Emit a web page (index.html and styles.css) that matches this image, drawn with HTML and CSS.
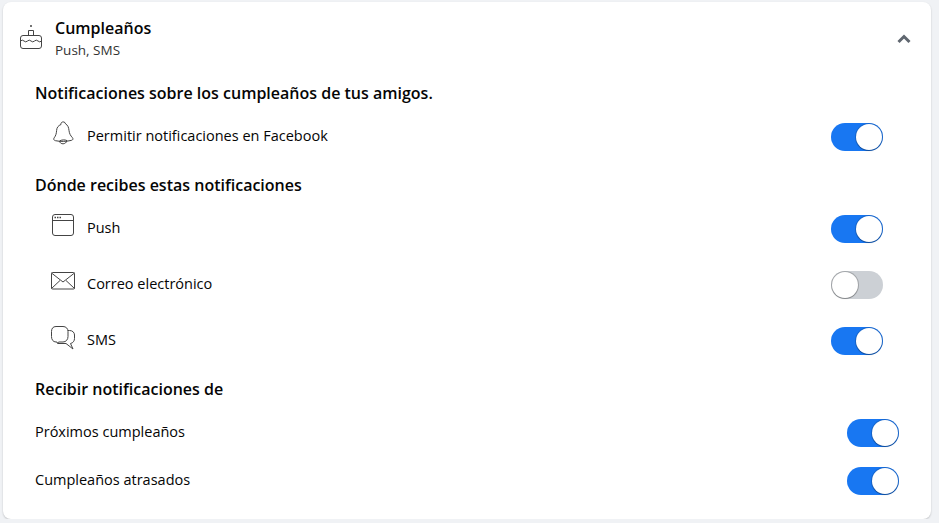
FILE: index.html
```html
<!DOCTYPE html>
<html lang="es">

<head>
    <meta charset="UTF-8">
    <meta name="viewport" content="width=device-width, initial-scale=1.0">
    <title>Cumpleaños</title>
    <link rel="stylesheet" href="styles.css">
</head>

<body>
    <div class="card">
        <!-- cabecera -->
        <div class="header">
            <svg class="cake" width="24" height="26" viewBox="0 0 24 26" fill="none" stroke="#444" stroke-width="1">
                <circle cx="12" cy="2" r="1" fill="#444" stroke="none"></circle>
                <path d="M9.500 11.500v-5h5v5"></path>
                <rect x="1.500" y="11.500" width="21" height="13" rx="2.500"></rect>
                <path d="M1.500 17q1.750-1.800 3.500 0t3.500 0t3.500 0t3.500 0t3.500 0t3.500 0"></path>
            </svg>
            <div class="header-text">
                <div class="title">Cumpleaños</div>
                <div class="sub">Push, SMS</div>
            </div>
            <svg class="chevron" width="14" height="10" viewBox="0 0 14 10" fill="none" stroke="#606770" stroke-width="3">
                <path d="M1.500 8L7 2.500L12.500 8"></path>
            </svg>
        </div>

        <div class="heading first">Notificaciones sobre los cumpleaños de tus amigos.</div>
        <div class="row icon-row">
            <span class="icon">
                <svg width="24" height="26" viewBox="0 0 24 26" fill="none" stroke="#444" stroke-width="1">
                    <path d="M10 4.500c-.6-3 4-3.700 4.600-.6c2.500 1.500 3 3.500 3.400 6.600c.4 3.300 1.600 5.200 3.300 7c1.200 1.500.6 2.500-1 2.900c-5 1.200-10.500 1.400-15.800.3c-1.600-.3-2.300-1.500-1.300-2.900c1.500-2 2.200-4.100 2.400-7.300c.2-3 1.600-4.900 4.400-6z"></path>
                    <path d="M8.500 21c.5 3.800 6.500 3.800 7.500-.4"></path>
                    <path d="M8.500 21c2-1.300 5.500-1.500 7.500-.4"></path>
                </svg>
            </span>
            <span class="label">Permitir notificaciones en Facebook</span>
            <span class="toggle on"></span>
        </div>

        <div class="heading">Dónde recibes estas notificaciones</div>
        <div class="row icon-row">
            <span class="icon">
                <svg width="24" height="26" viewBox="0 0 24 26" fill="none" stroke="#444" stroke-width="1">
                    <rect x="1.500" y="2.500" width="21" height="21" rx="2.500"></rect>
                    <path d="M1.500 8.500h21"></path>
                    <path d="M3.500 5.500h1.500M6 5.500h1.500M8.500 5.500h1.500" stroke-width="1.400"></path>
                </svg>
            </span>
            <span class="label">Push</span>
            <span class="toggle on"></span>
        </div>
        <div class="row icon-row">
            <span class="icon">
                <svg width="24" height="26" viewBox="0 0 24 26" fill="none" stroke="#444" stroke-width="1">
                    <rect x=".5" y="4.500" width="23" height="16.500" rx="1"></rect>
                    <path d="M.5 5l11.500 9l11.500-9M.5 20.500l8.500-8M23.500 20.500l-8.500-8"></path>
                </svg>
            </span>
            <span class="label">Correo electrónico</span>
            <span class="toggle"></span>
        </div>
        <div class="row icon-row">
            <span class="icon">
                <svg width="24" height="26" viewBox="0 0 24 26" fill="none" stroke="#444" stroke-width="1">
                    <path d="M5 2.500h7c3 0 5 2 5 5v5c0 3-2 5.500-5 5.500H7.500l-1 1.500l-.5-1.500H5c-3 0-4.500-2.500-4.500-5.500v-5c0-3 1.500-5 4.500-5z"></path>
                    <path d="M17 6.500h1.500c3 0 5 2 5 4.500v3.500c0 2.500-1.500 4.500-4 5l2.500 5.500l-7-5.500H7"></path>
                </svg>
            </span>
            <span class="label">SMS</span>
            <span class="toggle on"></span>
        </div>

        <div class="heading last">Recibir notificaciones de</div>
        <div class="row plain-row">
            <span class="label">Próximos cumpleaños</span>
            <span class="toggle on"></span>
        </div>
        <div class="row plain-row">
            <span class="label">Cumpleaños atrasados</span>
            <span class="toggle on"></span>
        </div>
    </div>
</body>

</html>
```

FILE: styles.css
```css
* {
    box-sizing: border-box;
}

body {
    margin: 0;
    background: #f0f2f5;
    color: #050505;
    font-family: "Open Sans", "Noto Sans", sans-serif;
}

.card {
    width: 928px;
    height: 517px;
    margin: 2px 0 0 3px;
    padding: 0 32px;
    background: #fff;
    border-radius: 8px;
    box-shadow: 0 1px 2px rgba(0, 0, 0, .2);
}

/* cabecera */
.header {
    display: flex;
    align-items: center;
    height: 70px;
    margin: 0 -12px 0 -16px;
    padding-top: 2px;
}
.cake {
    flex: none;
    margin-top: -2px;
}
.header-text {
    flex: 1;
    margin-left: 12px;
}
.title {
    font-size: 16px;
    font-weight: 600;
    line-height: 24px;
}
.sub {
    font-size: 13.500px;
    line-height: 20px;
    color: #333;
}
.chevron {
    flex: none;
    margin-top: 2px;
}

.heading {
    height: 36px;
    padding-top: 2px;
    font-size: 16px;
    font-weight: 600;
    line-height: 36px;
}
.heading.first {
    height: 37px;
    padding-top: 3px;
}
.heading.last {
    height: 40px;
}

.row {
    display: flex;
    align-items: center;
}
.icon-row {
    height: 56px;
    margin: 0 16px;
}
.plain-row {
    height: 48px;
}
.label {
    flex: 1;
    padding-bottom: 4px;
    font-size: 14.500px;
}

.icon {
    display: flex;
    flex: none;
    width: 24px;
    margin-right: 12px;
    padding-bottom: 8px;
}

/* interruptor */
.toggle {
    position: relative;
    flex: none;
    width: 52px;
    height: 28px;
    border-radius: 14px;
    background: #ccd0d5;
}
.toggle::after {
    content: "";
    position: absolute;
    top: 1px;
    left: 1px;
    width: 26px;
    height: 26px;
    border-radius: 50%;
    background: #fff;
    box-shadow: 0 0 0 1px rgba(0, 0, 0, .2), 0 1px 1px rgba(0, 0, 0, .2);
}
.toggle.on {
    background: #1877f2;
}
.toggle.on::after {
    left: 25px;
    box-shadow: 0 0 0 1px rgba(0, 0, 0, .15), 0 1px 1px rgba(0, 0, 0, .25);
}
```
